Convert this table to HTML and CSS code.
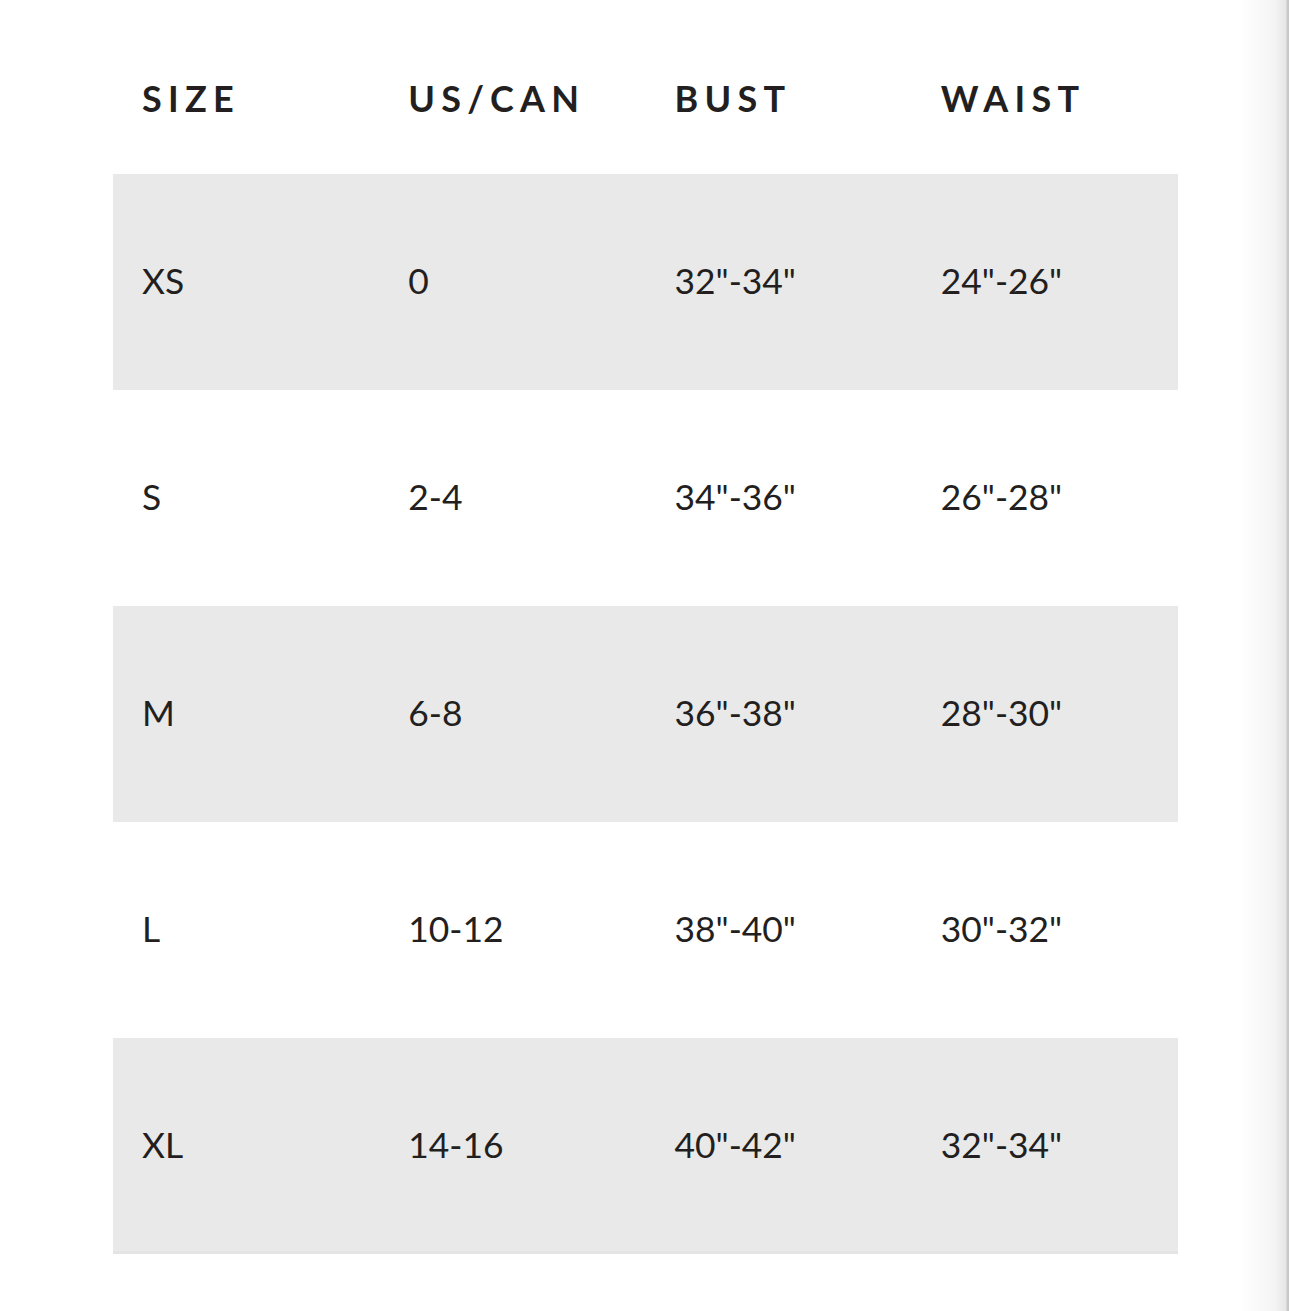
FILE: index.html
```html
<!DOCTYPE html>
<html lang="en">
<head>
<meta charset="utf-8">
<title>Size chart</title>
<link rel="stylesheet" href="styles.css">
</head>
<body>
<div class="page">
  <div class="chart">
    <div class="row head">
      <div class="cell">SIZE</div>
      <div class="cell">US/CAN</div>
      <div class="cell">BUST</div>
      <div class="cell">WAIST</div>
    </div>
    <div class="row shade">
      <div class="cell">XS</div>
      <div class="cell">0</div>
      <div class="cell">32"-34"</div>
      <div class="cell">24"-26"</div>
    </div>
    <div class="row">
      <div class="cell">S</div>
      <div class="cell">2-4</div>
      <div class="cell">34"-36"</div>
      <div class="cell">26"-28"</div>
    </div>
    <div class="row shade">
      <div class="cell">M</div>
      <div class="cell">6-8</div>
      <div class="cell">36"-38"</div>
      <div class="cell">28"-30"</div>
    </div>
    <div class="row">
      <div class="cell">L</div>
      <div class="cell">10-12</div>
      <div class="cell">38"-40"</div>
      <div class="cell">30"-32"</div>
    </div>
    <div class="row shade last">
      <div class="cell">XL</div>
      <div class="cell">14-16</div>
      <div class="cell">40"-42"</div>
      <div class="cell">32"-34"</div>
    </div>
  </div>
  <div class="edge-shadow"></div>
</div>
</body>
</html>
```
FILE: styles.css
```css
html, body {
  margin: 0;
  padding: 0;
  background: #ffffff;
}

.page {
  position: relative;
  width: 1290px;
  height: 1311px;
  overflow: hidden;
  font-family: Lato, "Open Sans", sans-serif;
  color: #231f20;
}

.chart {
  margin-left: 113px;
  width: 1065px;
  display: flex;
  flex-direction: column;
}

.row {
  display: grid;
  grid-template-columns: repeat(4, 1fr);
  height: 216px;
  box-sizing: border-box;
  padding-bottom: 2px;
  align-items: center;
  font-size: 35.4px;
  font-weight: 400;
}

.row.head {
  height: 174px;
  padding-bottom: 0;
  padding-top: 22px;
  font-weight: 700;
  font-size: 36px;
  letter-spacing: 0.175em;
}

.row.shade {
  background: #e9e9e9;
}

.row.last {
  box-shadow: inset 0 -3px 0 #e4e4e4;
}

.cell {
  padding-left: 29px;
  line-height: 1;
}

.edge-shadow {
  position: absolute;
  top: 0;
  right: 0;
  width: 50px;
  height: 100%;
  background: linear-gradient(to right, rgba(236,236,236,0) 0%, rgba(236,236,236,0.6) 70%, #e6e6e6 92%, #c9c9c9 94%, #c9c9c9 97%, #ffffff 97%);
}
```
